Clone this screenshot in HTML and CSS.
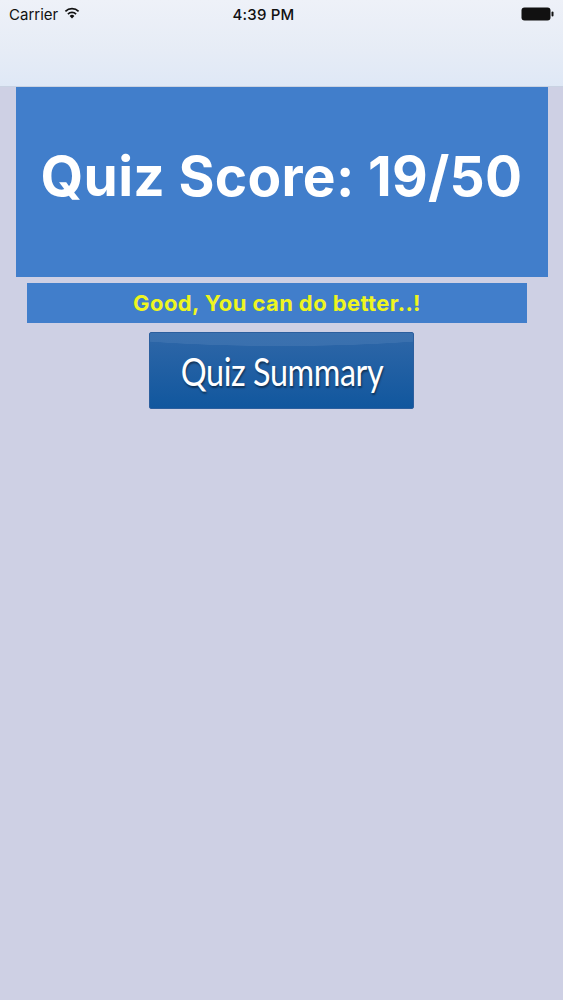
FILE: index.html
```html
<!DOCTYPE html>
<html>
<head>
<meta charset="utf-8">
<link rel="stylesheet" href="styles.css">
</head>
<body>
<header class="topbar">
  <div class="status">
    <div class="status-left">
      <span class="carrier">Carrier</span>
      <svg class="wifi" width="16" height="12" viewBox="0 0 16 12">
        <path d="M8 11.5 L5.6 8.9 A3.6 3.6 0 0 1 10.4 8.9 Z" fill="#111"/>
        <path d="M3.9 7.1 A5.9 5.9 0 0 1 12.1 7.1" stroke="#111" stroke-width="1.7" fill="none"/>
        <path d="M1.4 4.4 A9.4 9.4 0 0 1 14.6 4.4" stroke="#111" stroke-width="1.7" fill="none"/>
      </svg>
    </div>
    <span class="time">4:39 PM</span>
    <div class="status-right">
      <svg width="34" height="14" viewBox="0 0 34 14">
        <rect x="0.5" y="0.5" width="29" height="13" rx="3" fill="#111"/>
        <rect x="30.5" y="4.5" width="2" height="5" rx="1" fill="#111"/>
      </svg>
    </div>
  </div>
  <div class="navbar"></div>
</header>
<main class="content">
  <div class="score-box">
    <h1 class="score">Quiz Score: 19/50</h1>
  </div>
  <div class="message">Good, You can do better..!</div>
  <button class="summary-btn"><span class="summary-label">Quiz Summary</span></button>
</main>
</body>
</html>
```
FILE: styles.css
```css
html, body {
  margin: 0;
  padding: 0;
}
body {
  width: 563px;
  height: 1000px;
  background: #ced0e4;
  font-family: Inter, "Liberation Sans", sans-serif;
  overflow: hidden;
}
.topbar {
  height: 87px;
  background: linear-gradient(#eef1f8, #e6ecf6 60%, #dfe8f6);
  border-bottom: 1px solid #c9d2e2;
  box-sizing: border-box;
  display: flex;
  flex-direction: column;
}
.status {
  height: 28px;
  display: flex;
  align-items: center;
  justify-content: space-between;
  padding: 0 8px 0 9px;
  position: relative;
}
.status-left {
  display: flex;
  align-items: center;
  gap: 6px;
}
.carrier {
  font-size: 15px;
  color: #111;
}
.wifi {
  margin-top: -2px;
}
.time {
  position: absolute;
  left: 0;
  right: 36px;
  text-align: center;
  font-size: 15px;
  font-weight: 500;
  letter-spacing: 0.2px;
  color: #111;
}
.status-right {
  display: flex;
  align-items: center;
  margin-top: -1px;
}
.navbar {
  flex: 1;
}
.content {
  display: flex;
  flex-direction: column;
  align-items: center;
}
.score-box {
  width: 532px;
  height: 190px;
  background: #417ecb;
  display: flex;
  align-items: center;
  justify-content: center;
}
.score {
  margin: 0 0 12px 0;
  color: #ffffff;
  font-size: 55px;
  font-weight: 700;
  letter-spacing: 0.3px;
}
.message {
  margin-top: 6px;
  margin-right: 9px;
  width: 500px;
  height: 40px;
  background: #417ecb;
  color: #eef520;
  font-size: 22px;
  font-weight: 700;
  letter-spacing: 0.4px;
  display: flex;
  align-items: center;
  justify-content: center;
}
.summary-btn {
  margin-top: 9px;
  width: 265px;
  height: 77px;
  border: 1px solid #2c5f9e;
  border-radius: 2px;
  background:
    radial-gradient(ellipse 140% 60% at 50% -25%, #3d74b3 0%, #3a70ae 70%, rgba(0,0,0,0) 71%),
    linear-gradient(#2f67a8, #11579e);
  color: #ffffff;
  font-family: Lato, "Open Sans", sans-serif;
  font-size: 39px;
  padding: 0;
  cursor: pointer;
  display: flex;
  align-items: center;
  justify-content: center;
}
.summary-label {
  display: inline-block;
  transform: scaleX(0.83);
  letter-spacing: -0.5px;
  white-space: nowrap;
  text-shadow: 1px 2px 2px rgba(0,0,0,0.45);
}
```
